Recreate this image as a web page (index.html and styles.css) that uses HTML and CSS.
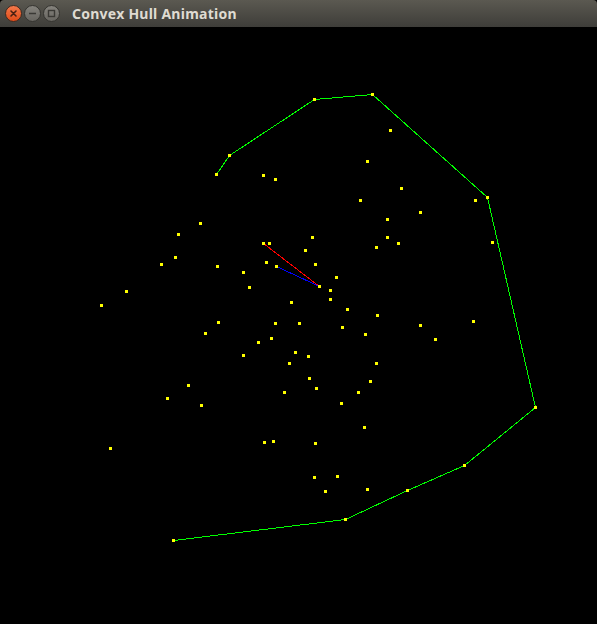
FILE: index.html
```html
<!DOCTYPE html>
<html>
<head>
<meta charset="utf-8">
<title>Convex Hull Animation</title>
<link rel="stylesheet" href="styles.css">
</head>
<body>
<div class="window">
  <header class="titlebar">
    <svg class="controls" width="62" height="27" viewBox="0 0 62 27">
      <defs>
        <linearGradient id="gClose" x1="0" y1="0" x2="0" y2="1">
          <stop offset="0" stop-color="#f47a4c"/>
          <stop offset="1" stop-color="#df4a17"/>
        </linearGradient>
        <linearGradient id="gGray" x1="0" y1="0" x2="0" y2="1">
          <stop offset="0" stop-color="#86847e"/>
          <stop offset="1" stop-color="#66645f"/>
        </linearGradient>
      </defs>
      <circle cx="13.5" cy="13.5" r="8" fill="url(#gClose)" stroke="#3a2a22" stroke-width="1"/>
      <path d="M11 11 L16 16 M16 11 L11 16" stroke="#4a2012" stroke-width="1.6" stroke-linecap="round"/>
      <circle cx="32.5" cy="13.5" r="8" fill="url(#gGray)" stroke="#34332f" stroke-width="1"/>
      <path d="M29 13.5 H36" stroke="#3a3935" stroke-width="1.5"/>
      <circle cx="51.5" cy="13.5" r="8" fill="url(#gGray)" stroke="#34332f" stroke-width="1"/>
      <rect x="48.5" y="10.5" width="6" height="6" fill="none" stroke="#3a3935" stroke-width="1.4"/>
    </svg>
    <h1 class="title">Convex Hull Animation</h1>
  </header>
  <main class="canvas">
    <svg class="plot" width="597" height="597" viewBox="0 27 597 597">
      <g class="hull" transform="translate(0.5 0.5)">
        <polyline points="216,174 229,155 314,99 372,94 487,197 535,407 464,465 407,490 345,519 173,540" fill="none" stroke="#00ff00" stroke-width="1"/>
        <line x1="263" y1="243" x2="319" y2="286" stroke="#ff0000" stroke-width="1"/>
        <line x1="276" y1="266" x2="319" y2="286" stroke="#0000ff" stroke-width="1"/>
      </g>
      <g id="pts" fill="#ffff00"></g>
    </svg>
  </main>
</div>
<script src="script.js"></script>
</body>
</html>
```

FILE: script.js
```js
var pts = [
  [216,174],[229,155],[314,99],[372,94],[487,197],[535,407],[464,465],[407,490],[345,519],[173,540],
  [263,175],[275,179],[200,223],[390,130],[367,161],[401,188],[360,200],[475,200],[420,212],[387,219],
  [387,237],[398,243],[376,247],[492,242],[178,234],[263,243],[269,243],[175,257],[161,264],[217,266],
  [266,262],[243,272],[249,287],[126,291],[101,305],[218,322],[205,333],[258,342],[312,237],[305,250],
  [276,266],[315,264],[319,286],[336,277],[330,290],[330,299],[291,302],[347,309],[377,315],[275,323],
  [299,323],[342,327],[420,325],[365,334],[435,339],[271,338],[295,352],[308,356],[289,363],[376,363],
  [243,355],[188,385],[167,398],[201,405],[284,392],[110,448],[264,442],[273,441],[309,378],[370,381],
  [316,388],[358,392],[341,403],[364,427],[315,443],[314,477],[337,476],[325,491],[367,489],[473,321]
];
var g = document.getElementById('pts');
var ns = 'http://www.w3.org/2000/svg';
pts.forEach(function (p) {
  var r = document.createElementNS(ns, 'rect');
  r.setAttribute('x', p[0] - 1);
  r.setAttribute('y', p[1] - 1);
  r.setAttribute('width', 3);
  r.setAttribute('height', 3);
  g.appendChild(r);
});
```

FILE: styles.css
```css
html, body {
  margin: 0;
  padding: 0;
  background: #000;
}
.window {
  width: 597px;
  height: 624px;
  display: flex;
  flex-direction: column;
  background: #000;
  overflow: hidden;
}
.titlebar {
  height: 27px;
  flex: 0 0 27px;
  display: flex;
  align-items: center;
  background: linear-gradient(#5b5951, #3e3d39);
  border-radius: 4px 4px 0 0;
}
.controls {
  display: block;
  flex: 0 0 auto;
}
.title {
  margin: 0 0 0 10px;
  font-family: "Noto Sans", "DejaVu Sans", sans-serif;
  font-weight: 700;
  font-size: 14px;
  line-height: 27px;
  color: #dfdbd2;
  letter-spacing: 0.25px;
  white-space: nowrap;
}
.canvas {
  flex: 1 1 auto;
  background: #000;
}
.plot {
  display: block;
  shape-rendering: crispEdges;
}
```
